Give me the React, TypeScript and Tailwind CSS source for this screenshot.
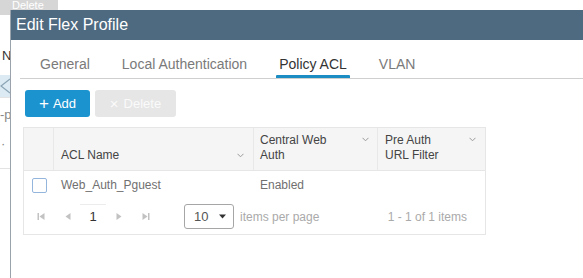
const Chevron = () => (
  <svg width="7" height="5" viewBox="0 0 7 5" className="shrink-0">
    <polyline points="0.5,0.8 3.5,3.8 6.5,0.8" fill="none" stroke="#9a9a9a" strokeWidth="1" />
  </svg>
);

const PageIcon = ({ kind }: { kind: "first" | "prev" | "next" | "last" }) => {
  const left = kind === "first" || kind === "prev";
  return (
    <svg width="9" height="9" viewBox="0 0 9 9">
      {left ? (
        <polygon points="7.5,1 7.5,8 2.5,4.5" fill="#c2c2c2" />
      ) : (
        <polygon points="1.5,1 1.5,8 6.5,4.5" fill="#c2c2c2" />
      )}
      {kind === "first" && <rect x="0.5" y="1" width="1.5" height="7" fill="#c2c2c2" />}
      {kind === "last" && <rect x="7" y="1" width="1.5" height="7" fill="#c2c2c2" />}
    </svg>
  );
};

const App = () => {
  return (
    <div className="relative w-[583px] h-[278px] overflow-hidden bg-white font-['Liberation_Sans',Arial,sans-serif]">
      {/* page behind the dialog */}
      <div className="flex flex-col">
        <div className="h-[15px] w-[58px] bg-[#d6d6d6] overflow-hidden">
          <div className="pl-[12px] text-[11px] leading-[11px] text-white">Delete</div>
        </div>
        <div className="mt-[34px] pl-[2px] text-[13px] leading-[14px] text-[#333]">N</div>
        <div className="mt-[12px] h-[22px] bg-[#dcebf3] flex items-center">
          <svg width="10" height="16" viewBox="0 0 10 16">
            <polyline points="10,1 1,8 10,15" fill="none" stroke="#8ba4b5" strokeWidth="1.2" />
          </svg>
        </div>
        <div className="h-[1px] bg-[#e3e3e3] w-[10px]" />
        <div className="mt-[10px] text-[13px] leading-[13px] text-[#888]">-p</div>
        <div className="mt-[16px] pl-[1px] text-[13px] leading-[13px] text-[#888]">·</div>
        <div className="mt-[18px] h-[1px] bg-[#e3e3e3] w-[10px]" />
      </div>

      {/* dialog */}
      <div className="absolute left-[10px] top-[10px] w-[600px] h-[268px] bg-white border-l border-[#9aa3ab] flex flex-col">
        <div className="h-[30px] bg-[#4e6a80] flex items-center pl-[5px] text-[16px] text-white">
          Edit Flex Profile
        </div>

        <div className="px-[9px]">
          {/* tabs */}
          <div className="flex pl-[4px] border-b border-[#cfcfcf] pt-[16px] text-[14px] leading-[16px]">
            {["General", "Local Authentication", "Policy ACL", "VLAN"].map((t) => (
              <div key={t} className="px-[16px] flex flex-col items-center">
                <span className={t === "Policy ACL" ? "text-[#333]" : "text-[#7a7a7a]"}>{t}</span>
                <div
                  className={`mt-[3px] h-[3px] self-stretch -mx-[3px] rounded-t-[1px] ${
                    t === "Policy ACL" ? "bg-[#1b8dc3]" : "bg-transparent"
                  }`}
                />
              </div>
            ))}
          </div>

          {/* action buttons */}
          <div className="flex gap-[5px] ml-[5px] mt-[11px] text-[13px]">
            <button className="h-[27px] w-[65px] rounded-[3px] bg-[#1b93cf] text-white flex items-center justify-center gap-[4px]">
              <span className="text-[17px] leading-none font-light">+</span>
              <span>Add</span>
            </button>
            <button className="h-[27px] w-[81px] rounded-[3px] bg-[#e6e6e6] text-[#fafafa] flex items-center justify-center gap-[5px]">
              <span className="text-[15px] leading-none">×</span>
              <span>Delete</span>
            </button>
          </div>

          {/* table */}
          <div className="ml-[3px] mt-[10px] w-[463px] border border-[#e6e6e6] text-[12px]">
            <div className="grid grid-cols-[30px_200px_124px_1fr] h-[43px] bg-[#f5f5f5] border-b border-[#e6e6e6] text-[#444] leading-[15px]">
              <div className="border-r border-[#e8e8e8]" />
              <div className="border-r border-[#e8e8e8] flex items-end pl-[7px] pr-[9px] pb-[7px]">
                <div className="flex w-full justify-between items-center">
                  <span>ACL Name</span>
                  <Chevron />
                </div>
              </div>
              <div className="border-r border-[#e8e8e8] flex items-end pl-[6px] pr-[8px] pb-[7px]">
                <div className="flex w-full justify-between items-start">
                  <span>
                    Central Web
                    <br />
                    Auth
                  </span>
                  <span className="pt-[4px]"><Chevron /></span>
                </div>
              </div>
              <div className="flex items-end pl-[7px] pr-[9px] pb-[7px]">
                <div className="flex w-full justify-between items-start">
                  <span>
                    Pre Auth
                    <br />
                    URL Filter
                  </span>
                  <span className="pt-[4px]"><Chevron /></span>
                </div>
              </div>
            </div>

            <div className="grid grid-cols-[30px_200px_124px_1fr] h-[28px] items-center text-[#707070]">
              <div className="flex justify-center pl-[1px]">
                <div className="w-[15px] h-[15px] border border-[#94b6dc] rounded-[2px] bg-white" />
              </div>
              <div className="pl-[7px]">Web_Auth_Pguest</div>
              <div className="pl-[6px]">Enabled</div>
              <div />
            </div>

            {/* pagination */}
            <div className="h-[35px] flex items-center pl-[4px] pr-[18px]">
              <div className="w-[26px] flex justify-center"><PageIcon kind="first" /></div>
              <div className="w-[26px] flex justify-center"><PageIcon kind="prev" /></div>
              <div className="w-[26px] h-[26px] flex items-center justify-center border-t border-[#ececec] text-[#333] text-[13px]">1</div>
              <div className="w-[26px] flex justify-center"><PageIcon kind="next" /></div>
              <div className="w-[26px] flex justify-center"><PageIcon kind="last" /></div>
              <div className="ml-[26px] h-[25px] w-[50px] border border-[#a6a6a6] rounded-[3px] flex items-center justify-between pl-[9px] pr-[7px] text-[13px] text-[#555]">
                <span>10</span>
                <svg width="7" height="5" viewBox="0 0 7 5">
                  <polygon points="0,0.5 7,0.5 3.5,4.5" fill="#333" />
                </svg>
              </div>
              <span className="ml-[6px] text-[#aaa]">items per page</span>
              <span className="ml-auto text-[#aaa]">1 - 1 of 1 items</span>
            </div>
          </div>
        </div>
      </div>
    </div>
  );
};

export default App;
